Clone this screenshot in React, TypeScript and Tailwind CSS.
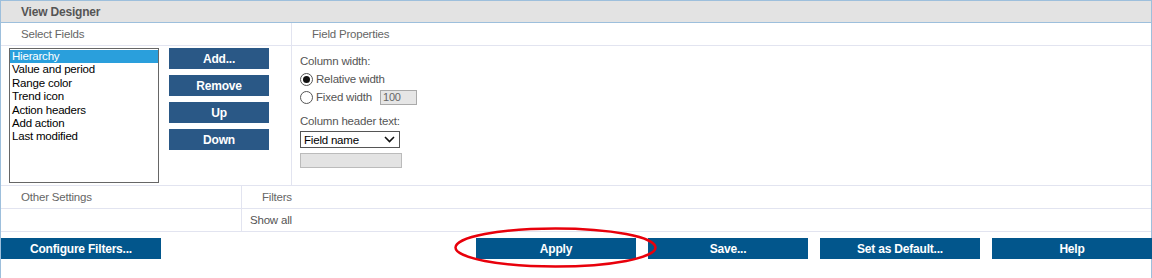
import React from "react";

const items = [
  "Hierarchy",
  "Value and period",
  "Range color",
  "Trend icon",
  "Action headers",
  "Add action",
  "Last modified",
];

function TopBtn({ label }: { label: string }) {
  return (
    <div className="w-[100px] h-[21px] bg-[#2a5886] text-white font-bold text-[12px] tracking-[-0.2px] flex items-center justify-center">
      {label}
    </div>
  );
}

function BottomBtn({ label }: { label: string }) {
  return (
    <div className="w-[160px] h-[21px] bg-[#02568c] text-white font-bold text-[12px] tracking-[-0.2px] flex items-center justify-center">
      {label}
    </div>
  );
}

function Radio({ checked }: { checked?: boolean }) {
  return (
    <div className="w-[13px] h-[13px] rounded-full border border-[#555] bg-white flex items-center justify-center">
      {checked && <div className="w-[7px] h-[7px] rounded-full bg-[#111]" />}
    </div>
  );
}

export default function App() {
  return (
    <div
      className="relative w-[1152px] h-[278px] bg-white text-[11.5px] tracking-[-0.2px] leading-[14px] text-[#333]"
      style={{ fontFamily: '"Liberation Sans", Arial, sans-serif' }}
    >
      <div className="border-l border-r border-t border-[#9dbfdc] h-[278px] flex flex-col">
        <div className="h-[22px] bg-[#e3e3e3] border-b border-[#9dbfdc] flex items-center pl-[20px] font-bold text-[12px] text-[#555]">
          View Designer
        </div>

        <div className="flex border-b border-[#e2e4f0]">
          <div className="w-[291px] border-r border-[#e2e4f0] flex flex-col">
            <div className="h-[23px] border-b border-[#e2e4f0] flex items-center pl-[20px] text-[#666]">
              Select Fields
            </div>
            <div className="h-[139px] flex pl-[8px] pt-[2px]">
              <div className="w-[150px] h-[135px] border border-[#666] bg-white flex flex-col pt-[1px]">
                {items.map((it, i) => (
                  <div
                    key={it}
                    className={
                      "h-[13.4px] leading-[13.4px] pl-[2px] text-black " +
                      (i === 0 ? "bg-[#2a9fdc] text-white" : "")
                    }
                  >
                    {it}
                  </div>
                ))}
              </div>
              <div className="ml-[10px] flex flex-col gap-[6px]">
                <TopBtn label="Add..." />
                <TopBtn label="Remove" />
                <TopBtn label="Up" />
                <TopBtn label="Down" />
              </div>
            </div>
          </div>

          <div className="flex-1 flex flex-col">
            <div className="h-[23px] border-b border-[#e2e4f0] flex items-center pl-[20px] text-[#666]">
              Field Properties
            </div>
            <div className="h-[139px] pl-[8px] pt-[8px] text-[#555] flex flex-col">
              <div className="h-[14px] flex items-center">Column width:</div>
              <div className="mt-[3px] h-[16px] flex items-center gap-[3px]">
                <Radio checked />
                <span>Relative width</span>
              </div>
              <div className="mt-[2px] h-[16px] flex items-center gap-[3px]">
                <Radio />
                <span>Fixed width</span>
                <div className="ml-[5px] w-[37px] h-[15px] bg-[#e6e6e6] border border-[#aaa] text-[#666] text-[11px] flex items-center pl-[2px]">
                  100
                </div>
              </div>
              <div className="mt-[9px] h-[14px] flex items-center">Column header text:</div>
              <div className="mt-[3px] w-[100px] h-[17px] border border-[#555] bg-white flex items-center justify-between pl-[3px] pr-[4px] text-black">
                <span>Field name</span>
                <svg width="11" height="7" viewBox="0 0 11 7">
                  <path d="M1 1 L5.5 5.5 L10 1" fill="none" stroke="#111" strokeWidth="1.6" />
                </svg>
              </div>
              <div className="mt-[5px] w-[102px] h-[15px] bg-[#e3e3e3] border border-[#bbb]" />
            </div>
          </div>
        </div>

        <div className="flex border-b border-[#e2e4f0]">
          <div className="w-[241px] border-r border-[#e2e4f0] flex flex-col">
            <div className="h-[23px] border-b border-[#e2e4f0] flex items-center pl-[20px] text-[#666]">
              Other Settings
            </div>
            <div className="h-[22px]" />
          </div>
          <div className="flex-1 flex flex-col">
            <div className="h-[23px] border-b border-[#e2e4f0] flex items-center pl-[20px] text-[#666]">
              Filters
            </div>
            <div className="h-[22px] flex items-center pl-[8px] text-[#555]">Show all</div>
          </div>
        </div>

        <div className="mt-[6px] flex mr-[-1px]">
          <BottomBtn label="Configure Filters..." />
          <div className="ml-auto flex gap-[12px]">
            <BottomBtn label="Apply" />
            <BottomBtn label="Save..." />
            <BottomBtn label="Set as Default..." />
            <BottomBtn label="Help" />
          </div>
        </div>
      </div>

      <svg className="absolute left-0 top-0 pointer-events-none" width="1152" height="278">
        <ellipse cx="555.5" cy="247.5" rx="100" ry="19" fill="none" stroke="#e8000b" strokeWidth="2.5" />
      </svg>
    </div>
  );
}
